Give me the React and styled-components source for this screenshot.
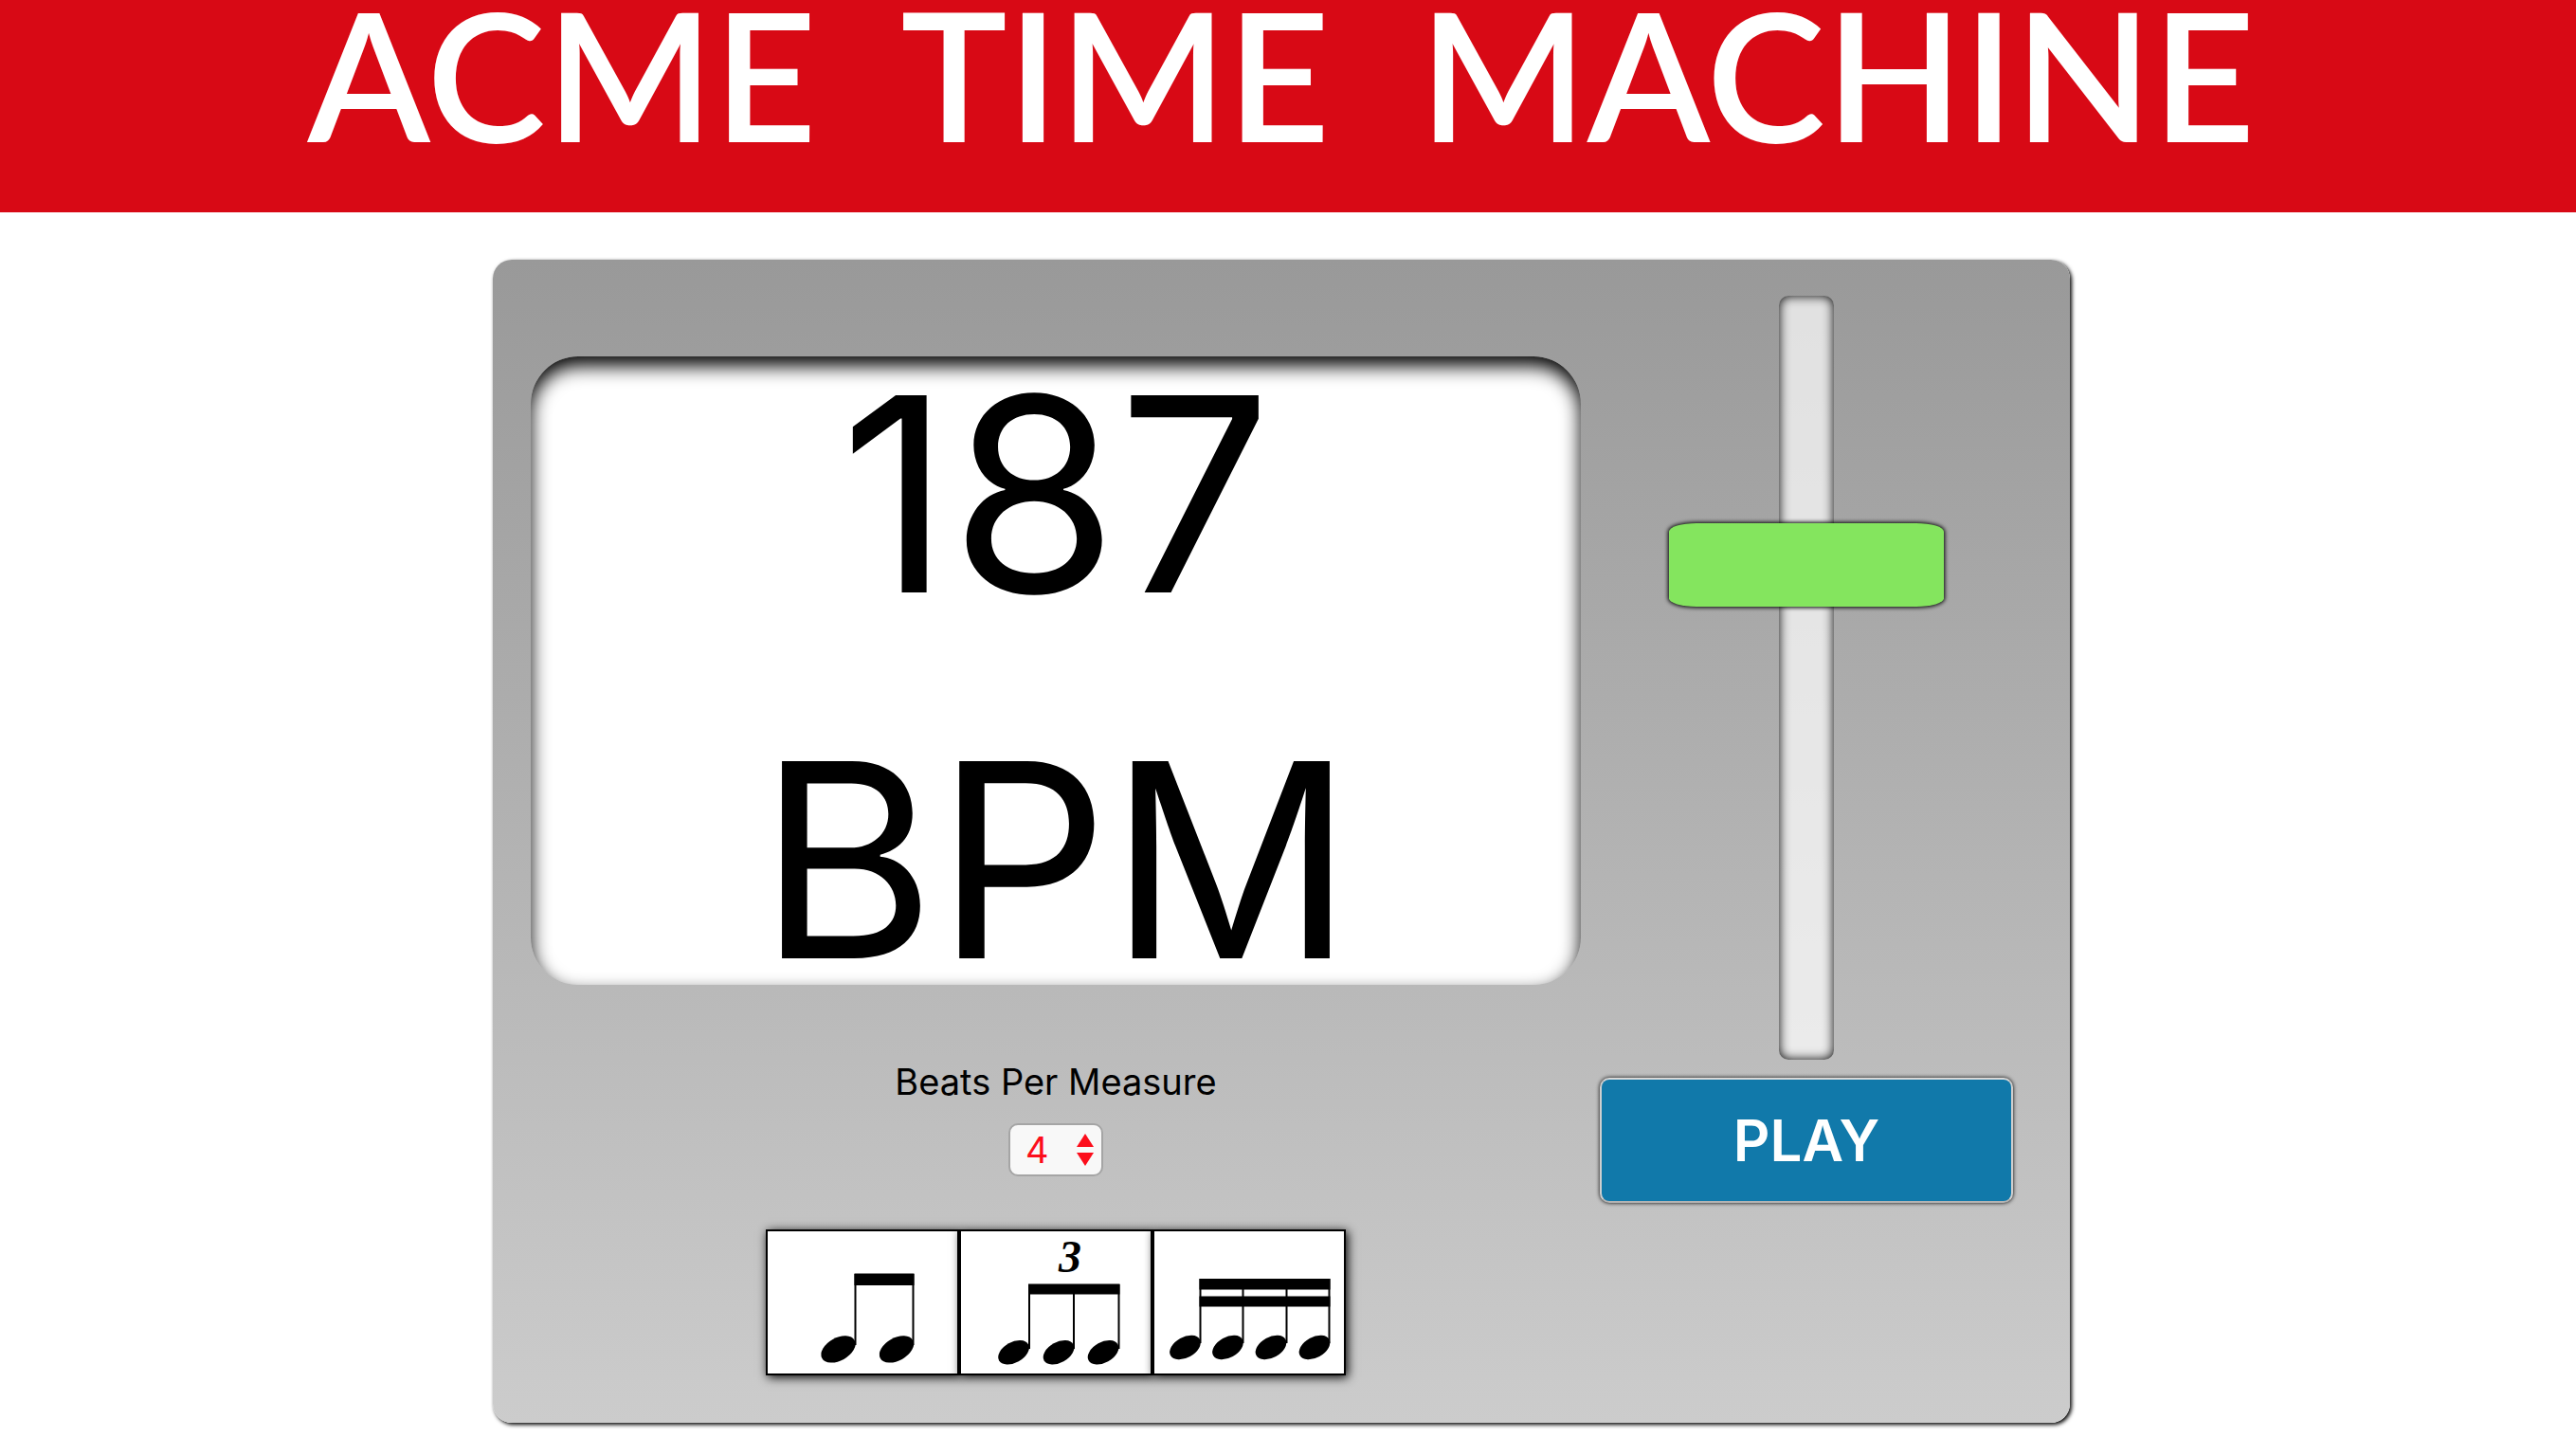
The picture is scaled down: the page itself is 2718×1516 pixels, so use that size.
import React, { useState } from "react";
import styled, { createGlobalStyle } from "styled-components";

const GlobalStyle = createGlobalStyle`
  *, *::before, *::after { box-sizing: border-box; }
  body {
    margin: 0;
    background: #fff;
    color: #000;
    font-family: Inter, "Liberation Sans", sans-serif;
  }
`;

const Header = styled.header`
  background: #d80915;
  padding: 8px 14px 78px 0;
`;

const Title = styled.h1`
  margin: 0;
  color: #fff;
  font-family: Lato, "Open Sans", sans-serif;
  font-size: 189px;
  font-weight: 600;
  line-height: 138px;
  text-align: center;
  white-space: pre;
`;

const Main = styled.main`
  padding: 50px 14px 14px 0;
`;

const Machine = styled.section`
  display: flex;
  justify-content: space-between;
  max-width: 1664px;
  margin: 0 auto;
  padding: 38px 60px 50px 40px;
  border-radius: 20px;
  background: linear-gradient(#999, #ccc);
  box-shadow: 2px 2px 4px #000;
`;

const Readout = styled.div`
  display: flex;
  flex-direction: column;
  align-items: center;
  flex: 0 1 1108px;
  padding-top: 64px;
`;

const Screen = styled.output`
  display: flex;
  flex-direction: column;
  align-items: center;
  gap: 178px;
  width: 100%;
  padding: 41px 28px 28px;
  border-radius: 50px;
  background: #fff;
  box-shadow: inset 0 10px 20px #000;
  font-size: 286px;
  line-height: 208px;
`;

const MeasureLabel = styled.label`
  margin-top: 80px;
  font-size: 38px;
  line-height: 44px;
`;

const SelectBox = styled.span`
  position: relative;
  display: inline-flex;
  margin: 22px 0 56px;
`;

const BeatSelect = styled.select`
  appearance: none;
  width: 100px;
  height: 56px;
  padding: 0 40px 0 16px;
  border: 2px solid #a5a5a5;
  border-radius: 10px;
  background: #f8f8f8;
  color: #fc0d1b;
  font-family: inherit;
  font-size: 38px;
`;

const SelectArrows = styled.svg`
  position: absolute;
  top: 11px;
  right: 10px;
  pointer-events: none;
`;

const Subdivisions = styled.div`
  display: flex;
`;

const NoteButton = styled.button`
  display: block;
  padding: 0;
  border: 2px solid #000;
  background: #fff;
  box-shadow: 2px 2px 10px #000;
  svg { display: block; }
`;

const Controls = styled.div`
  display: flex;
  flex-direction: column;
  align-items: center;
  flex: 0 1 436px;
`;

const TempoSlider = styled.input`
  appearance: none;
  writing-mode: vertical-lr;
  direction: rtl;
  width: 58px;
  height: 806px;
  margin: 0;
  border-radius: 10px;
  background: rgba(255, 255, 255, 0.7);
  box-shadow: inset 0 0 12px #000;

  &::-webkit-slider-runnable-track {
    width: 58px;
    height: 100%;
  }
  &::-webkit-slider-thumb {
    appearance: none;
    width: 290px;
    height: 88px;
    margin-left: -116px;
    border-radius: 10%;
    background: #84e55e;
    box-shadow: 0 0 4px 1px #000;
  }
`;

const PlayButton = styled.button`
  width: 100%;
  height: 132px;
  margin-top: 19px;
  border: 2px solid;
  border-color: #d8d8d8 #cfcfcf #b4b4b4;
  border-radius: 10px;
  background: #1179aa;
  box-shadow: 0 0 4px #000;
  color: #fff;
  font-family: inherit;
  font-size: 60px;
  font-weight: 600;
`;

const Head = ({ x, y, s = 1 }) => (
  <ellipse rx={19.6 * s} ry={12 * s} transform={`translate(${x} ${y}) rotate(-29)`} />
);

const Stem = ({ x, top, bottom }) => <rect x={x} y={top} width="2" height={bottom - top} />;

const Eighths = () => (
  <svg width="200" height="150" viewBox="0 0 200 150">
    <rect x="91.5" y="44.5" width="63" height="12.5" />
    <Stem x={91.5} top={45} bottom={120} />
    <Stem x={152.5} top={45} bottom={120} />
    <Head x={74.5} y={124.4} />
    <Head x={136} y={124.4} />
  </svg>
);

const Triplet = () => (
  <svg width="200" height="150" viewBox="0 0 200 150">
    <text
      x="115"
      y="43"
      textAnchor="middle"
      fontFamily="Liberation Serif, serif"
      fontSize="48"
      fontStyle="italic"
      fontWeight="700"
    >
      3
    </text>
    <rect x="71" y="55.5" width="96.5" height="11" />
    <Stem x={71} top={56} bottom={124} />
    <Stem x={118} top={56} bottom={124} />
    <Stem x={165.5} top={56} bottom={124} />
    <Head x={55.5} y={127.8} s={0.9} />
    <Head x={103} y={127.8} s={0.9} />
    <Head x={150} y={127.8} s={0.9} />
  </svg>
);

const Sixteenths = () => (
  <svg width="200" height="150" viewBox="0 0 200 150">
    <rect x="47.5" y="50" width="138" height="11.5" />
    <rect x="47.5" y="68.5" width="138" height="11" />
    {[47.5, 92.5, 138.5, 183.5].map((x) => (
      <Stem key={x} x={x} top={50} bottom={118} />
    ))}
    {[32.5, 77.5, 123, 169].map((x) => (
      <Head key={x} x={x} y={122.5} s={0.9} />
    ))}
  </svg>
);

export default function App() {
  const [bpm, setBpm] = useState(187);
  const [beats, setBeats] = useState("4");
  const [playing, setPlaying] = useState(false);

  return (
    <>
      <GlobalStyle />
      <Header>
        <Title>ACME{"  "}TIME{"  "}MACHINE</Title>
      </Header>
      <Main>
        <Machine>
          <Readout>
            <Screen htmlFor="tempo">
              <span>{bpm}</span>
              <span>BPM</span>
            </Screen>
            <MeasureLabel htmlFor="beats">Beats Per Measure</MeasureLabel>
            <SelectBox>
              <BeatSelect id="beats" value={beats} onChange={(e) => setBeats(e.target.value)}>
                {["2", "3", "4", "5", "6", "7", "8"].map((n) => (
                  <option key={n}>{n}</option>
                ))}
              </BeatSelect>
              <SelectArrows width="18" height="34" viewBox="0 0 18 34" fill="#fc0d1b">
                <path d="M9 0 18 14H0Z" />
                <path d="M0 20h18L9 34Z" />
              </SelectArrows>
            </SelectBox>
            <Subdivisions>
              <NoteButton type="button" aria-label="Eighth notes"><Eighths /></NoteButton>
              <NoteButton type="button" aria-label="Triplets"><Triplet /></NoteButton>
              <NoteButton type="button" aria-label="Sixteenth notes"><Sixteenths /></NoteButton>
            </Subdivisions>
          </Readout>
          <Controls>
            <TempoSlider
              id="tempo"
              type="range"
              aria-label="Tempo"
              min="20"
              max="271"
              value={bpm}
              onChange={(e) => setBpm(Number(e.target.value))}
            />
            <PlayButton type="button" onClick={() => setPlaying(!playing)}>
              {playing ? "STOP" : "PLAY"}
            </PlayButton>
          </Controls>
        </Machine>
      </Main>
    </>
  );
}
